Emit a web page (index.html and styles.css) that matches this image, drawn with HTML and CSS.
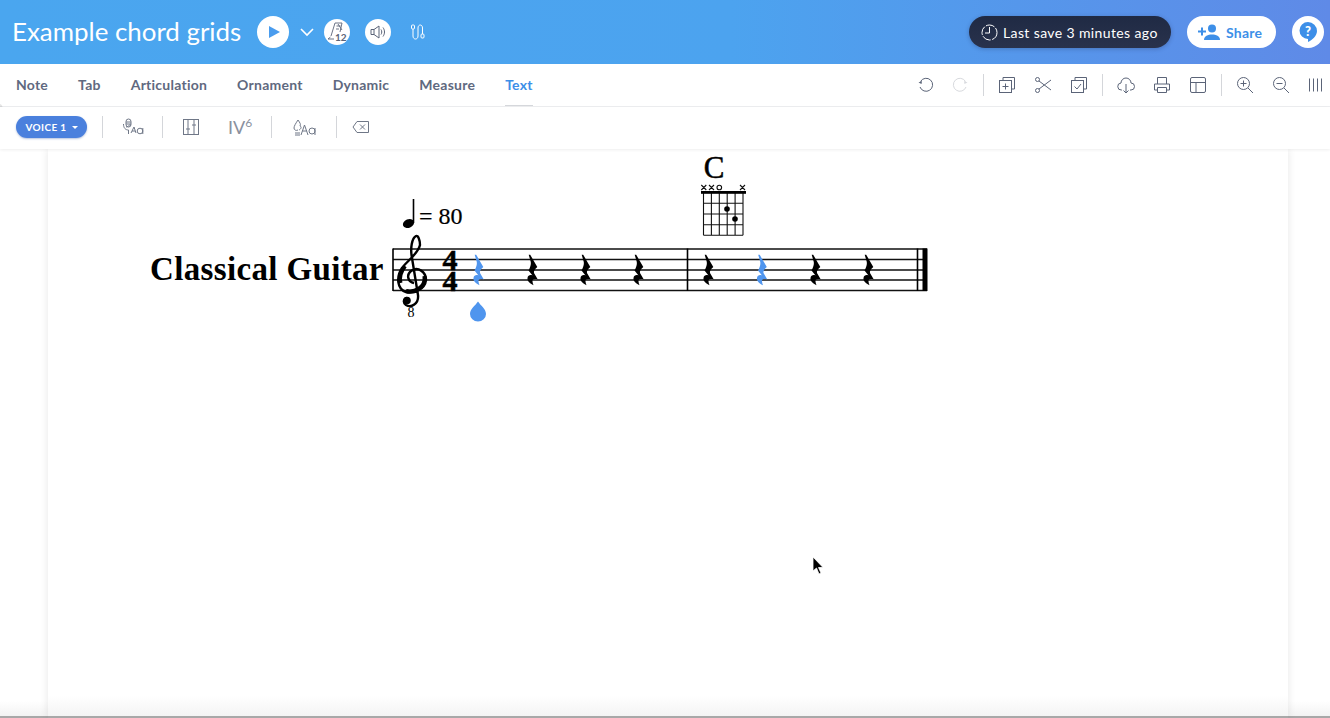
FILE: index.html
```html
<!DOCTYPE html>
<html>
<head>
    <title>Example chord grids</title>
    <link rel="stylesheet" href="styles.css">
</head>
<body>
    <div class="app">
        <header class="topbar">
            <h1 class="title">Example chord grids</h1>
            <button class="round play"><svg width="14" height="14" viewBox="0 0 14 14"><path d="M2 1l11 6-11 6z" fill="#4a9cee"/></svg></button>
            <svg class="chevron" width="16" height="10" viewBox="0 0 16 10"><path d="M2 2l6 6 6-6" fill="none" stroke="#fff" stroke-width="1.6"/></svg>
            <button class="round small metro">
                <svg width="22" height="22" viewBox="0 0 22 22" fill="none" stroke="#5b6478" stroke-width=".9"><path d="M9 2h7l-2 9M9 2L5 15M10.500 5h4M10 8h3M12 3l4 6"/><path d="M2 18h6M2 18l2.500-2"/><text x="9" y="20" class="metro-num">12</text></svg>
            </button>
            <button class="round small sound">
                <svg width="20" height="20" viewBox="0 0 20 20" fill="none" stroke="#5b6478" stroke-width="1"><path d="M3 7.500h3v5H3zM6 7.500l5-3.500v12l-5-3.500M13 7.500c1 1.500 1 3.500 0 5M15 5.500c2 3 2 6 0 9"/></svg>
            </button>
            <svg class="fork" width="16" height="18" viewBox="0 0 16 18" fill="none" stroke="#fff" stroke-width="1"><rect x="1.500" y="2" width="3" height="4" rx="1"/><rect x="11" y="11" width="3" height="4" rx="1"/><path d="M3 6v7c0 4 5 4 5 0V5c0-4 4.500-4 4.500 0v6"/></svg>
            <div class="spacer"></div>
            <div class="save-pill">
                <svg width="17" height="17" viewBox="0 0 17 17" fill="none" stroke="#fff" stroke-width="1"><circle cx="8.500" cy="8.500" r="7.500" stroke-dasharray="9 1.500"/><path d="M8.500 3v6H4"/></svg>
                <span>Last save 3 minutes ago</span>
            </div>
            <button class="share">
                <svg width="24" height="16" viewBox="0 0 24 16" fill="#3d8fe8"><circle cx="14" cy="4.500" r="4"/><path d="M6 16c0-4 4-5.500 8-5.500s8 1.500 8 5.500z"/><path d="M3 3.500h2v3h3v2H5v3H3v-3H0v-2h3z"/></svg>
                <span>Share</span>
            </button>
            <button class="round help"><svg width="20" height="22" viewBox="0 0 20 22"><path d="M10 1a9 9 0 0 1 9 9c0 5-5 9-9 11v-3a8 8 0 0 1 0-17z" fill="#3d8fe8"/><text x="10" y="15" class="help-mark">?</text></svg></button>
        </header>

        <nav class="tabs">
            <div class="tab-list">
                <a>Note</a>
                <a>Tab</a>
                <a>Articulation</a>
                <a>Ornament</a>
                <a>Dynamic</a>
                <a>Measure</a>
                <a class="active">Text</a>
            </div>
            <div class="tool-list">
                <svg class="tool undo" viewBox="0 0 18 18"><path d="M3.500 5.500A6.500 6.500 0 1 1 3 11"/><path d="M1.500 6.500l3.500-1.500-.5 3z" fill="#5b6478" stroke="none"/></svg>
                <svg class="tool off" viewBox="0 0 18 18"><path d="M14.500 5.500A6.500 6.500 0 1 0 15 11"/><path d="M16.500 6.500l-3.500-1.500.5 3z" fill="#d8dade" stroke="none"/></svg>
                <i class="sep"></i>
                <svg class="tool" viewBox="0 0 18 18"><rect x="1.500" y="4.500" width="12" height="12"/><path d="M5 4.500V1.500h11.500V13h-3M7.500 7.500v6M4.500 10.500h6"/></svg>
                <svg class="tool" viewBox="0 0 18 18"><circle cx="3.500" cy="3.500" r="2"/><circle cx="3.500" cy="14.500" r="2"/><path d="M5 5l12 9M5 13L17 4"/></svg>
                <svg class="tool" viewBox="0 0 18 18"><rect x="1.500" y="4.500" width="12" height="12"/><path d="M5 4.500V1.500h11.500V13h-3M4.500 10.500l2.500 2.500 4-5"/></svg>
                <i class="sep"></i>
                <svg class="tool" viewBox="0 0 18 18"><path d="M5 14H4.500a3.500 3.500 0 0 1-.5-7 5 5 0 0 1 10 0 3.500 3.500 0 0 1 0 7H13M9 8v9M6.500 14.500L9 17l2.500-2.500"/></svg>
                <svg class="tool" viewBox="0 0 18 18"><path d="M4.500 8V1.500h9V8M4.500 14H1.500V8h15v6h-3M4.500 11.500h9v5h-9z"/></svg>
                <svg class="tool" viewBox="0 0 18 18"><rect x="1.500" y="1.500" width="15" height="15" rx="1.500"/><path d="M1.500 6.500h15M7 6.500v10"/></svg>
                <i class="sep"></i>
                <svg class="tool" viewBox="0 0 18 18"><circle cx="7.500" cy="7.500" r="6"/><path d="M12 12l5 5M7.500 4.500v6M4.500 7.500h6"/></svg>
                <svg class="tool" viewBox="0 0 18 18"><circle cx="7.500" cy="7.500" r="6"/><path d="M12 12l5 5M4.500 7.500h6"/></svg>
                <svg class="tool" viewBox="0 0 18 18"><path d="M1.500 2.500v13M5.500 2.500v13M9.500 2.500v13M13.500 2.500v13"/></svg>
            </div>
        </nav>

        <div class="toolbar">
            <button class="voice">VOICE 1 <span class="caret"></span></button>
            <i class="sep wide"></i>
            <svg class="tool lyric" viewBox="0 0 22 18"><rect x="4" y="1" width="5" height="8" rx="2.500"/><path d="M1.500 6c0 4 2 6 5 6M6.500 12v4M4 9c3 0 3-3 5-2M4 4h5M4 6h5M9 15l3-6 2 6M10 13h3"/><circle cx="18" cy="13" r="2.800"/><path d="M20.800 10v6"/></svg>
            <i class="sep wide"></i>
            <svg class="tool slider" viewBox="0 0 18 18"><rect x="1.500" y="1.500" width="15" height="15"/><path d="M6 1.500v15M12 1.500v15M4 11h4M10 7h4"/></svg>
            <span class="numeral">IV<sup>6</sup></span>
            <i class="sep wide"></i>
            <svg class="tool fret" viewBox="0 0 24 18"><path d="M6 2c2 3 3 4 2 6 2 1 1 3-1 4M6 2C4 5 2 8 2 10c0 2 2 3 4 2M3 15h5M3 17h5"/><path d="M9 17l3.500-10 3.500 10M10.500 13h4"/><circle cx="20" cy="13" r="3"/><path d="M23 10v7"/></svg>
            <i class="sep wide"></i>
            <svg class="tool erase" viewBox="0 0 18 14"><path d="M5 1.500h11.500v11H5L1 7zM8 4.500l5 5M13 4.500l-5 5"/></svg>
        </div>

        <main class="stage">
            <section class="sheet">
                <svg class="score" width="1240" height="200" viewBox="48 149 1240 200">
                    <defs>
                        <path id="rest" d="M-4.300-15.300L-2.800-15.300 4.300-3C2-1 .5 1 1 3L4.800 9.500C2 8.500-1 9-.5 11.500-.3 13 0 14 .5 15.300-3 13.500-6 11-5.500 8-5 5-2.500 4.500-.5 5.500L-4.500.5C-2.800-2.500-1.800-5.500-2.200-8Z"/>
                    </defs>

                    <text x="150" y="280" class="instrument">Classical Guitar</text>

                    <!-- tempo -->
                    <ellipse cx="408.500" cy="223.500" rx="5.800" ry="4.300" transform="rotate(-22 408.500 223.500)"/>
                    <path d="M413.500 199v24" class="stem"/>
                    <text x="419" y="224" class="tempo">= 80</text>

                    <!-- staff -->
                    <path class="staff" d="M393 249H927M393 259.500H927M393 270H927M393 280H927M393 290.500H927"/>
                    <path class="bar" d="M393 248.500V291M687.500 248.500V291M917.500 248.500V291"/>
                    <rect x="922.500" y="248.500" width="5" height="42.500"/>

                    <!-- clef -->
                    <path class="clef" d="M414 283C408 282 406 275 411 271 418 266 426 272 426 280 425 289 414 294 406 292 397 289 396 277 402 268 407 261 418 254 420 245 420 240 418 235 416 236 412 238 410 248 412 258L418 295C419 304 411 308 406 305 403 303 403 299 407 298"/>
                    <path class="clef-thick" d="M424.500 276C426 288 414 293 406 291M400.500 283C398.500 276 402 270 405 266"/>
                    <circle cx="407" cy="300.500" r="3.800"/>
                    <text x="411" y="317" class="clef-8">8</text>

                    <!-- time signature -->
                    <text x="450" y="270" class="timesig">4</text>
                    <text x="450" y="291" class="timesig">4</text>

                    <!-- rests -->
                    <use href="#rest" x="479" y="270" class="picked"/>
                    <use href="#rest" x="533" y="270"/>
                    <use href="#rest" x="586" y="270"/>
                    <use href="#rest" x="639" y="270"/>
                    <use href="#rest" x="709" y="270"/>
                    <use href="#rest" x="762.500" y="270" class="picked"/>
                    <use href="#rest" x="816" y="270"/>
                    <use href="#rest" x="869" y="270"/>

                    <!-- drop handle -->
                    <path class="picked" d="M478 301.500C481 306 486 309 486 314A8 7.500 0 0 1 470 314C470 309 475 306 478 301.500Z"/>

                    <!-- chord -->
                    <text x="714" y="177.500" class="chord">C</text>
                    <path class="grid" d="M703.500 192V235.200M711.400 192V235.200M719.300 192V235.200M727.200 192V235.200M735.100 192V235.200M743 192V235.200M703.500 203.300H743M703.500 214H743M703.500 224.700H743M703.500 235.200H743"/>
                    <rect x="701" y="191" width="45" height="2.800"/>
                    <circle cx="727" cy="209" r="2.800"/>
                    <circle cx="735" cy="219" r="2.800"/>
                    <path class="grid" d="M701.300 185l5 5M706.300 185l-5 5M709 185l5 5M714 185l-5 5M740 185l5 5M745 185l-5 5"/>
                    <circle class="grid" cx="719.300" cy="187.500" r="2.300"/>
                </svg>
            </section>
        </main>

        <i class="edge-tab"></i>
        <svg class="cursor" width="12" height="20" viewBox="0 0 12 20"><path d="M1 1v14l3.500-3 2.500 6 2-1-2.500-5.500H11z" fill="#000" stroke="#fff" stroke-width=".8"/></svg>
    </div>
</body>
</html>
```

FILE: styles.css
```css
* {
    box-sizing: border-box;
}
html, body {
    margin: 0;
    height: 100%;
    overflow: hidden;
}
body {
    font-family: Lato, "Open Sans", sans-serif;
    background-color: #fff;
}
.app {
    position: relative;
    height: 718px;
    display: flex;
    flex-direction: column;
}
button {
    border: none;
    padding: 0;
    font-family: inherit;
    cursor: pointer;
}

/* blue title bar */
.topbar {
    height: 64px;
    flex: none;
    display: flex;
    align-items: center;
    padding: 0 6px 0 12px;
    background: linear-gradient(90deg, #4aa6ef 0%, #4ca3ef 55%, #5f8ae7 100%);
}
.title {
    margin: 0 16px 2px 0;
    width: 229px;
    font-size: 25.9px;
    font-weight: 400;
    white-space: nowrap;
    color: #fff;
}
.round {
    display: flex;
    align-items: center;
    justify-content: center;
    width: 32px;
    height: 32px;
    border-radius: 50%;
    background-color: #fff;
}
.round.small {
    width: 26px;
    height: 26px;
}
.play svg {
    margin-left: 2px;
}
.chevron {
    margin: 0 9px 0 10px;
}
.sound {
    margin-left: 15px;
}
.fork {
    margin-left: 19px;
}
.metro-num {
    font-size: 10px;
    font-weight: 700;
    fill: #5b6478;
    stroke: none;
}
.spacer {
    flex: 1;
}
.save-pill {
    display: flex;
    align-items: center;
    gap: 5px;
    width: 202px;
    height: 32px;
    padding-left: 12px;
    border-radius: 16px;
    background: linear-gradient(180deg, #1f2a44, #29324c);
    box-shadow: 0 1px 4px rgba(30, 40, 80, .3);
    color: #fff;
    font-size: 14px;
    letter-spacing: .38px;
    white-space: nowrap;
}
.share {
    display: flex;
    align-items: center;
    gap: 4px;
    width: 89px;
    height: 32px;
    margin-left: 16px;
    padding-left: 11px;
    border-radius: 16px;
    background-color: #fff;
    color: #3d8fe8;
    font-size: 14px;
    font-weight: 700;
    letter-spacing: .2px;
}
.help {
    margin-left: 16px;
}
.help-mark {
    font-size: 13px;
    font-weight: 900;
    fill: #fff;
    text-anchor: middle;
}

/* tabs row */
.tabs {
    height: 43px;
    flex: none;
    display: flex;
    align-items: center;
    justify-content: space-between;
    padding: 0 4px 0 16px;
    border-bottom: 1px solid #eeeff1;
}
.tab-list {
    display: flex;
    height: 100%;
    gap: 30px;
}
.tab-list a {
    display: flex;
    align-items: center;
    height: 100%;
    border-bottom: 1px solid transparent;
    font-size: 14px;
    font-weight: 700;
    letter-spacing: .24px;
    color: #5f6980;
}
.tab-list a.active {
    color: #3d8fe8;
    border-bottom-color: #d5d7db;
}
.tool-list {
    display: flex;
    align-items: center;
    gap: 18px;
}
.tool {
    width: 18px;
    height: 18px;
    flex: none;
    fill: none;
    stroke: #5b6478;
    stroke-width: 1;
}
.tool.off {
    stroke: #d8dade;
}
.tool.undo {
    margin-right: -2px;
}
.sep {
    display: block;
    width: 1px;
    height: 22px;
    flex: none;
    background-color: #d4d6da;
}
.tool-list .sep {
    margin: 0 -4px;
}

/* voice row */
.toolbar {
    height: 42px;
    flex: none;
    display: flex;
    align-items: center;
    padding: 0 0 2px 16px;
    position: relative;
    z-index: 1;
    background-color: #fff;
    box-shadow: 0 1px 3px rgba(0, 0, 0, .07);
}
.voice {
    display: flex;
    align-items: center;
    justify-content: center;
    gap: 5px;
    width: 71px;
    height: 22px;
    margin-right: 15px;
    border-radius: 11px;
    background-color: #4a80dd;
    color: #fff;
    font-size: 10px;
    font-weight: 700;
    letter-spacing: .4px;
    box-shadow: 0 1px 2px rgba(40, 80, 160, .35);
}
.caret {
    border: 3px solid transparent;
    border-top-color: #fff;
    border-bottom: none;
}
.toolbar .tool {
    stroke: #6f7787;
}
.lyric {
    width: 22px;
    margin: 0 18px 0 19px;
}
.slider {
    margin: 0 28px 0 19px;
}
.numeral {
    width: 23px;
    margin-right: 20px;
    font-size: 18px;
    color: #8a919e;
    white-space: nowrap;
}
.numeral sup {
    font-size: 12px;
    line-height: 0;
}
.fret {
    width: 24px;
    margin: 0 20px;
}
.erase {
    width: 18px;
    height: 14px;
    margin-left: 15px;
}

/* score */
.stage {
    flex: 1;
    overflow: hidden;
    padding: 0 42px 0 48px;
    background: linear-gradient(180deg, #fff 0, #fff 97%, #f3f3f3 99.6%, #a8a8a8 99.6%);
}
.sheet {
    height: 100%;
    background: linear-gradient(180deg, #fff 0, #fff 96%, #f4f4f4 99.600%, #a8a8a8 99.600%);
    box-shadow: 0 0 8px rgba(0, 0, 0, .1);
}
.score {
    display: block;
}
.instrument {
    font-family: "Liberation Serif", serif;
    font-size: 33px;
    font-weight: 700;
    letter-spacing: .35px;
}
.tempo {
    font-family: "Liberation Serif", serif;
    font-size: 24px;
    stroke: #000;
    stroke-width: .2;
}
.stem, .bar {
    fill: none;
    stroke: #000;
    stroke-width: 1.600;
}
.staff {
    fill: none;
    stroke: #111;
    stroke-width: 1.400;
}
.clef {
    fill: none;
    stroke: #000;
    stroke-width: 2.400;
}
.clef-thick {
    fill: none;
    stroke: #000;
    stroke-width: 4;
}
.clef-8 {
    font-family: "Liberation Serif", serif;
    font-size: 14px;
    text-anchor: middle;
}
.timesig {
    font-family: "Liberation Serif", serif;
    font-size: 30px;
    font-weight: 700;
    text-anchor: middle;
    stroke: #000;
    stroke-width: .5;
}
.picked {
    fill: #4f95ee;
}
.chord {
    font-family: "Liberation Serif", serif;
    font-size: 31px;
    text-anchor: middle;
    stroke: #000;
    stroke-width: .5;
}
.grid {
    fill: none;
    stroke: #111;
    stroke-width: 1.100;
}
.edge-tab {
    position: absolute;
    left: -3px;
    top: 104px;
    width: 6px;
    height: 12px;
    border-radius: 50%;
    background-color: rgba(0, 0, 0, .1);
}
.cursor {
    position: absolute;
    left: 812px;
    top: 556px;
}
```
